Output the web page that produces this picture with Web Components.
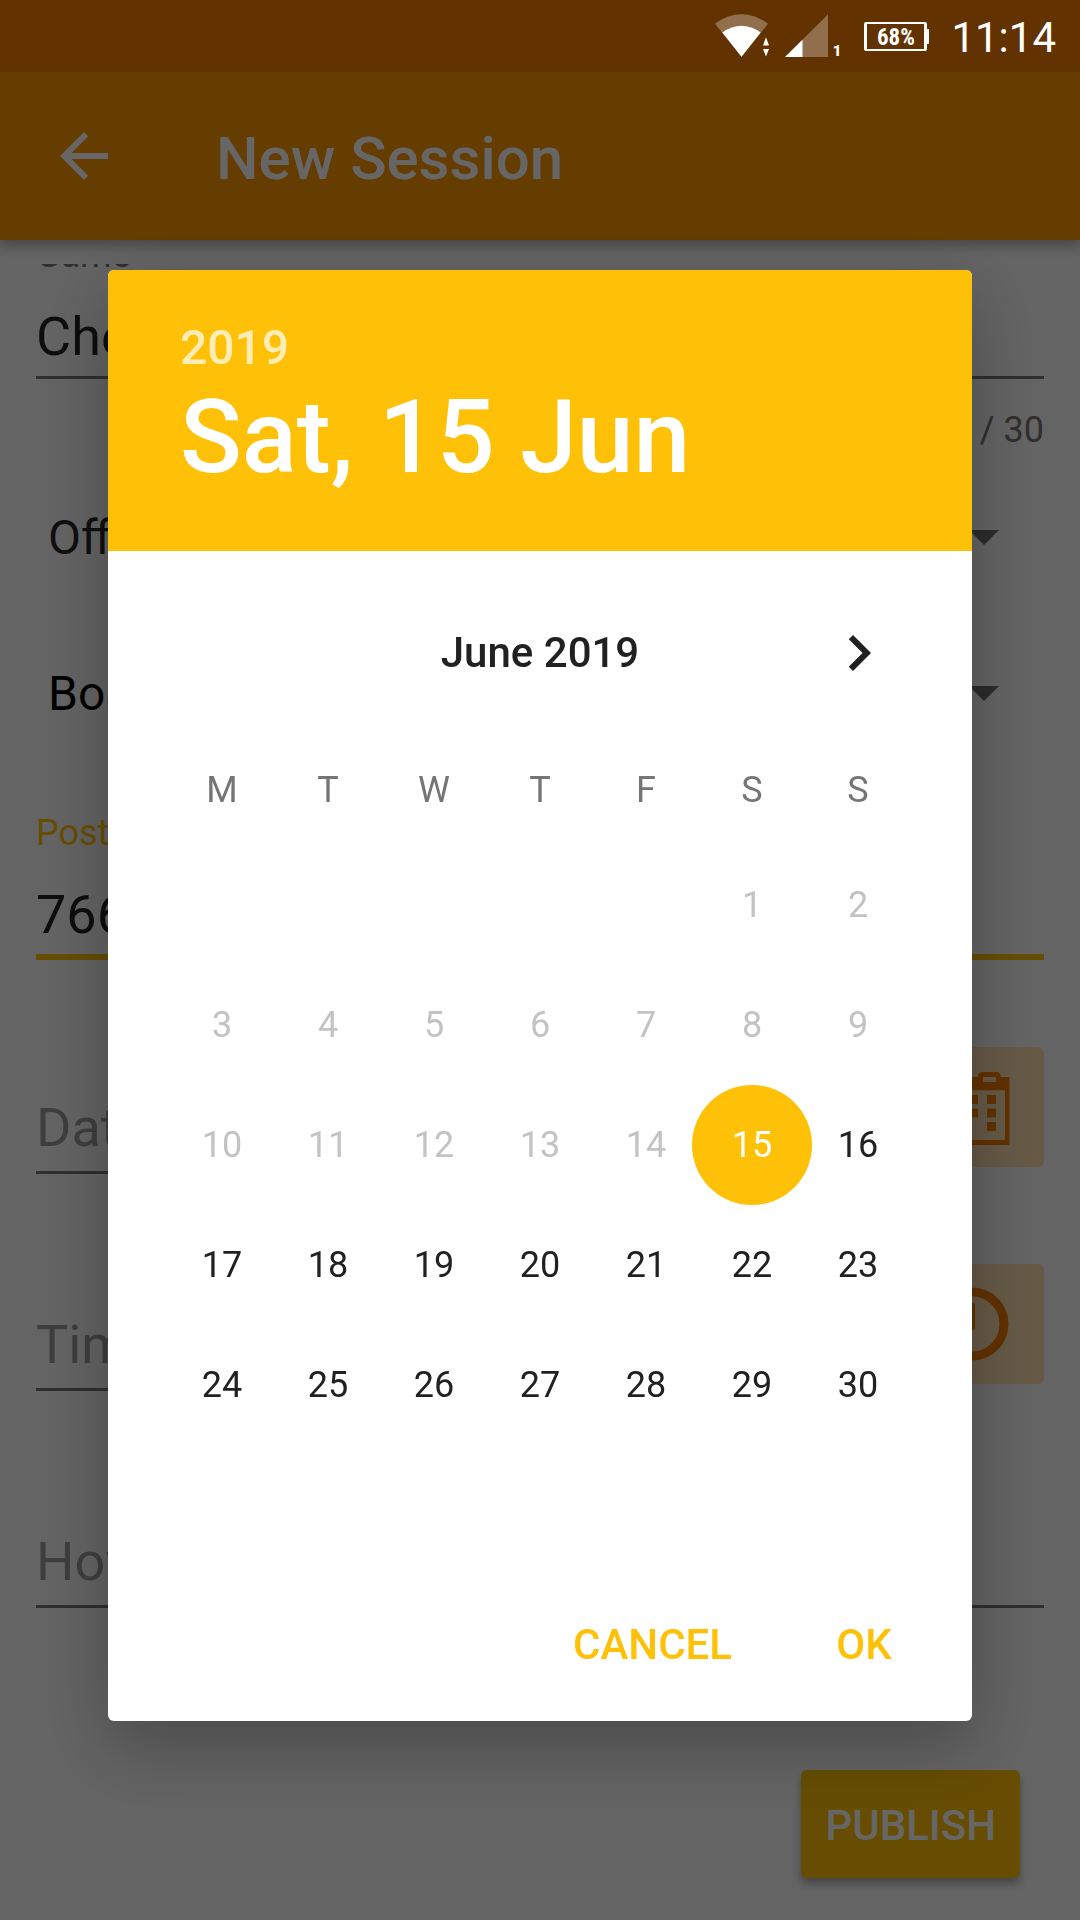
<!DOCTYPE html>
<html lang="en">
<head>
<meta charset="utf-8">
<meta name="viewport" content="width=device-width">
<title>New Session</title>
<style>
  html, body { margin: 0; height: 100%; }
  body { font-family: Roboto, "Noto Sans", sans-serif; background: #fafafa; }
</style>
</head>
<body>
<session-screen></session-screen>

<script>
const define = (name, html, setup) => {
  const template = document.createElement('template');
  template.innerHTML = html;
  customElements.define(name, class extends HTMLElement {
    constructor() {
      super();
      this.attachShadow({ mode: 'open' }).append(template.content.cloneNode(true));
    }
    connectedCallback() { if (setup) setup(this, this.shadowRoot); }
  });
};

define('status-bar', `
  <style>
    :host { display: flex; align-items: center; justify-content: flex-end; height: 72px; padding-right: 24px;
            box-sizing: border-box; background: #623200; color: #fff; position: relative; z-index: 3; }
    svg { display: block; fill: #fff; }
    .battery { display: grid; place-items: center; box-sizing: border-box; width: 63px; height: 29px; margin-left: 23px;
               border: 2px solid #fff; border-width: 2px 3px; border-radius: 2px; }
    .battery span { padding-top: 2px; font: 700 23px/24px "Roboto Condensed", Roboto, sans-serif; }
    .nub { width: 2px; height: 15px; background: #fff; }
    .sim { font: 900 15px/14px Roboto, sans-serif; padding: 30px 0 0 5px; }
    time { font-size: 42px; line-height: 50px; margin-left: 22px; padding-top: 4px; }
  </style>
  <svg width="114" height="72" viewBox="714 0 114 72" aria-label="Wi-Fi and mobile signal">
    <path d="M715 23.7Q741.5 5 768 23.7L741.5 56.7z" opacity=".3"/>
    <path d="M722.3 32.5Q741.5 19 760.7 32.5L741.5 56.7z"/>
    <path d="M766 37.3l3 8.2h-6zM763 49h6l-3 7.5z"/>
    <path d="M785 57L828 14.5V57z" opacity=".3"/>
    <path d="M785 57L802.5 39.7V57z"/>
  </svg>
  <span class="sim">1</span>
  <span class="battery"><span>68%</span></span><span class="nub"></span>
  <time>11:14</time>`);

define('app-bar', `
  <style>
    :host { display: flex; align-items: center; gap: 96px; height: 168px; padding-left: 48px; background: #ff9800;
            color: #fff; box-shadow: 0 6px 12px rgba(0,0,0,.3); position: relative; z-index: 1; }
    button { border: 0; padding: 0; background: none; color: inherit; }
    svg { display: block; width: 72px; height: 72px; fill: currentColor; }
    h1 { margin: 0; padding-top: 6px; font-size: 60px; line-height: 72px; font-weight: 500; }
  </style>
  <button type="button" aria-label="Back"><svg viewBox="0 0 24 24"><path d="M20 11H7.83l5.59-5.59L12 4l-8 8 8 8 1.41-1.41L7.83 13H20z"/></svg></button>
  <h1><slot></slot></h1>`);

define('text-field', `
  <style>
    :host { display: block; --line: #757575; --label: #757575; }
    :host([focused]) { --line: #ffc107; --label: #ffc107; }
    label { display: block; height: 44px; font-size: 36px; line-height: 44px; color: var(--label); }
    input { display: block; box-sizing: content-box; width: 100%; height: 78px; padding: 21px 0 0; margin: 0; border: 0;
            border-bottom: 3px solid var(--line); border-radius: 0; background: none; outline: 0;
            font: 54px/78px Roboto, sans-serif; color: rgba(0,0,0,.87); }
    :host([focused]) input { border-bottom-width: 6px; }
    :host([empty]) label { height: 42px; visibility: hidden; }
    :host([empty]) input { padding: 0 0 4px; }
    input::placeholder { color: rgba(0,0,0,.38); opacity: 1; }
    p { margin: 29px 0 0; font-size: 36px; line-height: 44px; text-align: right; color: #757575; }
  </style>
  <label for="f"></label>
  <input id="f" type="text" autocomplete="off">`,
  (host, root) => {
    const label = host.getAttribute('label'), input = root.querySelector('input');
    root.querySelector('label').textContent = host.hasAttribute('empty') ? '' : label;
    if (host.hasAttribute('empty')) { input.placeholder = label; input.setAttribute('aria-label', label); }
    input.value = host.getAttribute('value') || '';
    if (host.hasAttribute('counter')) {
      const p = document.createElement('p');
      p.textContent = host.getAttribute('counter');
      root.append(p);
    }
  });

define('select-field', `
  <style>
    :host { display: grid; align-items: center; height: 72px; color: rgba(0,0,0,.87); }
    select, svg { grid-area: 1 / 1; }
    select { appearance: none; box-sizing: border-box; width: 100%; height: 72px; padding: 2px 90px 0 12px; border: 0;
             background: none; font: 48px/70px Roboto, sans-serif; color: inherit; }
    svg { justify-self: end; width: 30px; height: 15px; margin-right: 45px; fill: #6c6c6c; pointer-events: none; }
  </style>
  <select></select>
  <svg viewBox="0 0 30 15"><path d="M0 0h30L15 15z"/></svg>`,
  (host, root) => {
    const select = root.querySelector('select');
    select.setAttribute('aria-label', host.getAttribute('label'));
    select.add(new Option(host.getAttribute('value')));
  });

define('icon-button', `
  <style>
    :host { display: block; }
    button { display: grid; place-items: center; width: 144px; height: 120px; padding: 0; border: 0; border-radius: 6px;
             background: #ffe0b2; color: #f57c00; }
  </style>
  <button type="button"><slot></slot></button>`,
  (host, root) => root.querySelector('button').setAttribute('aria-label', host.getAttribute('label')));

define('session-form', `
  <style>
    :host { display: block; flex: 1; margin-top: 24px; overflow: hidden; }
    /* the list is scrolled a little way down */
    form { display: flex; flex-direction: column; margin-top: -31px; padding: 0 36px 42px; }
    .mode { margin-top: 49px; }
    .kind { margin-top: 84px; color: #000; }
    .code { margin: 82px 0 87px; }
    .row { display: flex; gap: 24px; margin-bottom: 90px; }
    .row text-field { flex: 1; }
    .last { margin-bottom: 162px; }
    svg { display: block; width: 80px; height: 80px; }
    .publish { align-self: flex-end; height: 108px; margin-right: 24px; padding: 3px 24px 0; border: 0; border-radius: 6px;
               background: #ffc107; color: #fff; font: 500 42px/50px Roboto, sans-serif;
               box-shadow: 0 6px 9px rgba(0,0,0,.3); }
  </style>
  <form>
    <text-field label="Game" value="Chess" counter="5 / 30"></text-field>
    <select-field class="mode" label="Mode" value="Offline"></select-field>
    <select-field class="kind" label="Category" value="Board game"></select-field>
    <text-field class="code" focused label="Postcode" value="76646"></text-field>
    <div class="row">
      <text-field empty label="Date"></text-field>
      <icon-button label="Pick a date"><svg viewBox="932 1067 80 80" fill="currentColor">
        <path fill-rule="evenodd" d="M934.5 1077H943.5V1076.5Q943.5 1072 948 1072H961.500Q966 1072 966 1076.500V1077H978V1076.500Q978 1072 982.500 1072H996.500Q1000.700 1072 1000.700 1076.500V1077H1009.500V1145H934.500zM939 1090.300V1140H1005V1090.300zM948 1077V1082H961V1077zM983 1077V1082H996V1077z"/>
        <path d="M951 1095h9v9h-9zM969 1095h9v9h-9zM987 1095h9v9h-9zM951 1108.500h9v9h-9zM969 1108.500h9v9h-9zM987 1108.500h9v9h-9zM987 1122h9v9h-9z"/>
      </svg></icon-button>
    </div>
    <div class="row">
      <text-field empty label="Time"></text-field>
      <icon-button label="Pick a time"><svg viewBox="0 0 80 80" fill="none" stroke="currentColor">
        <circle cx="40" cy="40" r="32" stroke-width="9"/><path d="M40 19v24L26 52" stroke-width="6"/>
      </svg></icon-button>
    </div>
    <div class="row last"><text-field empty label="How many players"></text-field></div>
    <button class="publish" type="button">PUBLISH</button>
  </form>`);

define('month-grid', `
  <style>
    :host { display: block; padding: 0 61px; }
    table { width: 100%; table-layout: fixed; border-collapse: collapse; font-size: 36px; line-height: 42px; }
    th { height: 110px; padding: 0; font-weight: 400; color: #757575; }
    td { height: 120px; padding: 0; text-align: center; }
    button { display: block; width: 120px; height: 120px; margin: 0 -7px; padding: 0; border: 0; border-radius: 50%;
             background: none; font: inherit; color: #212121; }
    button:disabled { color: #c3c3c3; }
    button[aria-pressed] { background: #ffc107; color: #fff; }
  </style>
  <table><thead><tr></tr></thead><tbody></tbody></table>`,
  (host, root) => {
    root.querySelector('tr').innerHTML = [...'MTWTFSS'].map(d => '<th scope="col">' + d + '</th>').join('');
    const offset = +host.getAttribute('offset'), days = +host.getAttribute('days'), today = +host.getAttribute('selected');
    let html = '';
    for (let start = 1 - offset; start <= days; start += 7) {
      html += '<tr>';
      for (let day = start; day < start + 7; day++) {
        const state = day < today ? ' disabled' : day === today ? ' aria-pressed="true"' : '';
        html += '<td>' + (day > 0 && day <= days ? '<button type="button"' + state + '>' + day + '</button>' : '') + '</td>';
      }
      html += '</tr>';
    }
    root.querySelector('tbody').innerHTML = html;
  });

define('date-dialog', `
  <style>
    :host { position: fixed; inset: 0; z-index: 2; display: grid; place-items: center; padding-top: 71px;
            background: rgba(0,0,0,.6); }
    section { width: 80%; border-radius: 6px; background: #fff; box-shadow: 0 26px 72px rgba(0,0,0,.28); }
    header { padding: 50px 72px 53px; border-radius: 6px 6px 0 0; background: #ffc107; color: #fff; font-weight: 500; }
    .year { font-size: 48px; line-height: 56px; color: rgba(255,255,255,.7); }
    h2 { margin: 0; font-size: 102px; line-height: 122px; font-weight: 500; }
    nav { display: grid; grid-template-columns: 72px 1fr 72px; align-items: center; padding: 66px 77px 46px; }
    nav span { grid-column: 2; text-align: center; font-size: 42px; line-height: 50px; font-weight: 500; color: #212121; }
    button { border: 0; padding: 0; background: none; }
    svg { display: block; width: 72px; height: 72px; fill: #212121; }
    footer { display: flex; justify-content: flex-end; gap: 12px; padding: 146px 12px 22px; }
    footer button { min-width: 192px; height: 108px; padding: 0 24px; font: 500 42px/50px Roboto, sans-serif; color: #ffc107; }
  </style>
  <section role="dialog" aria-label="Choose a date">
    <header><div class="year">2019</div><h2>Sat, 15 Jun</h2></header>
    <nav><span>June 2019</span><button type="button" aria-label="Next month"><svg viewBox="0 0 24 24"><path d="M10 6L8.590 7.410 13.170 12l-4.580 4.590L10 18l6-6z"/></svg></button></nav>
    <month-grid offset="5" days="30" selected="15"></month-grid>
    <footer><button type="button">CANCEL</button><button type="button">OK</button></footer>
  </section>`);

define('session-screen', `
  <style>
    :host { display: flex; flex-direction: column; min-height: 100vh; background: #fafafa; }
  </style>
  <status-bar></status-bar>
  <app-bar>New Session</app-bar>
  <session-form></session-form>
  <date-dialog></date-dialog>`);
</script>
</body>
</html>
